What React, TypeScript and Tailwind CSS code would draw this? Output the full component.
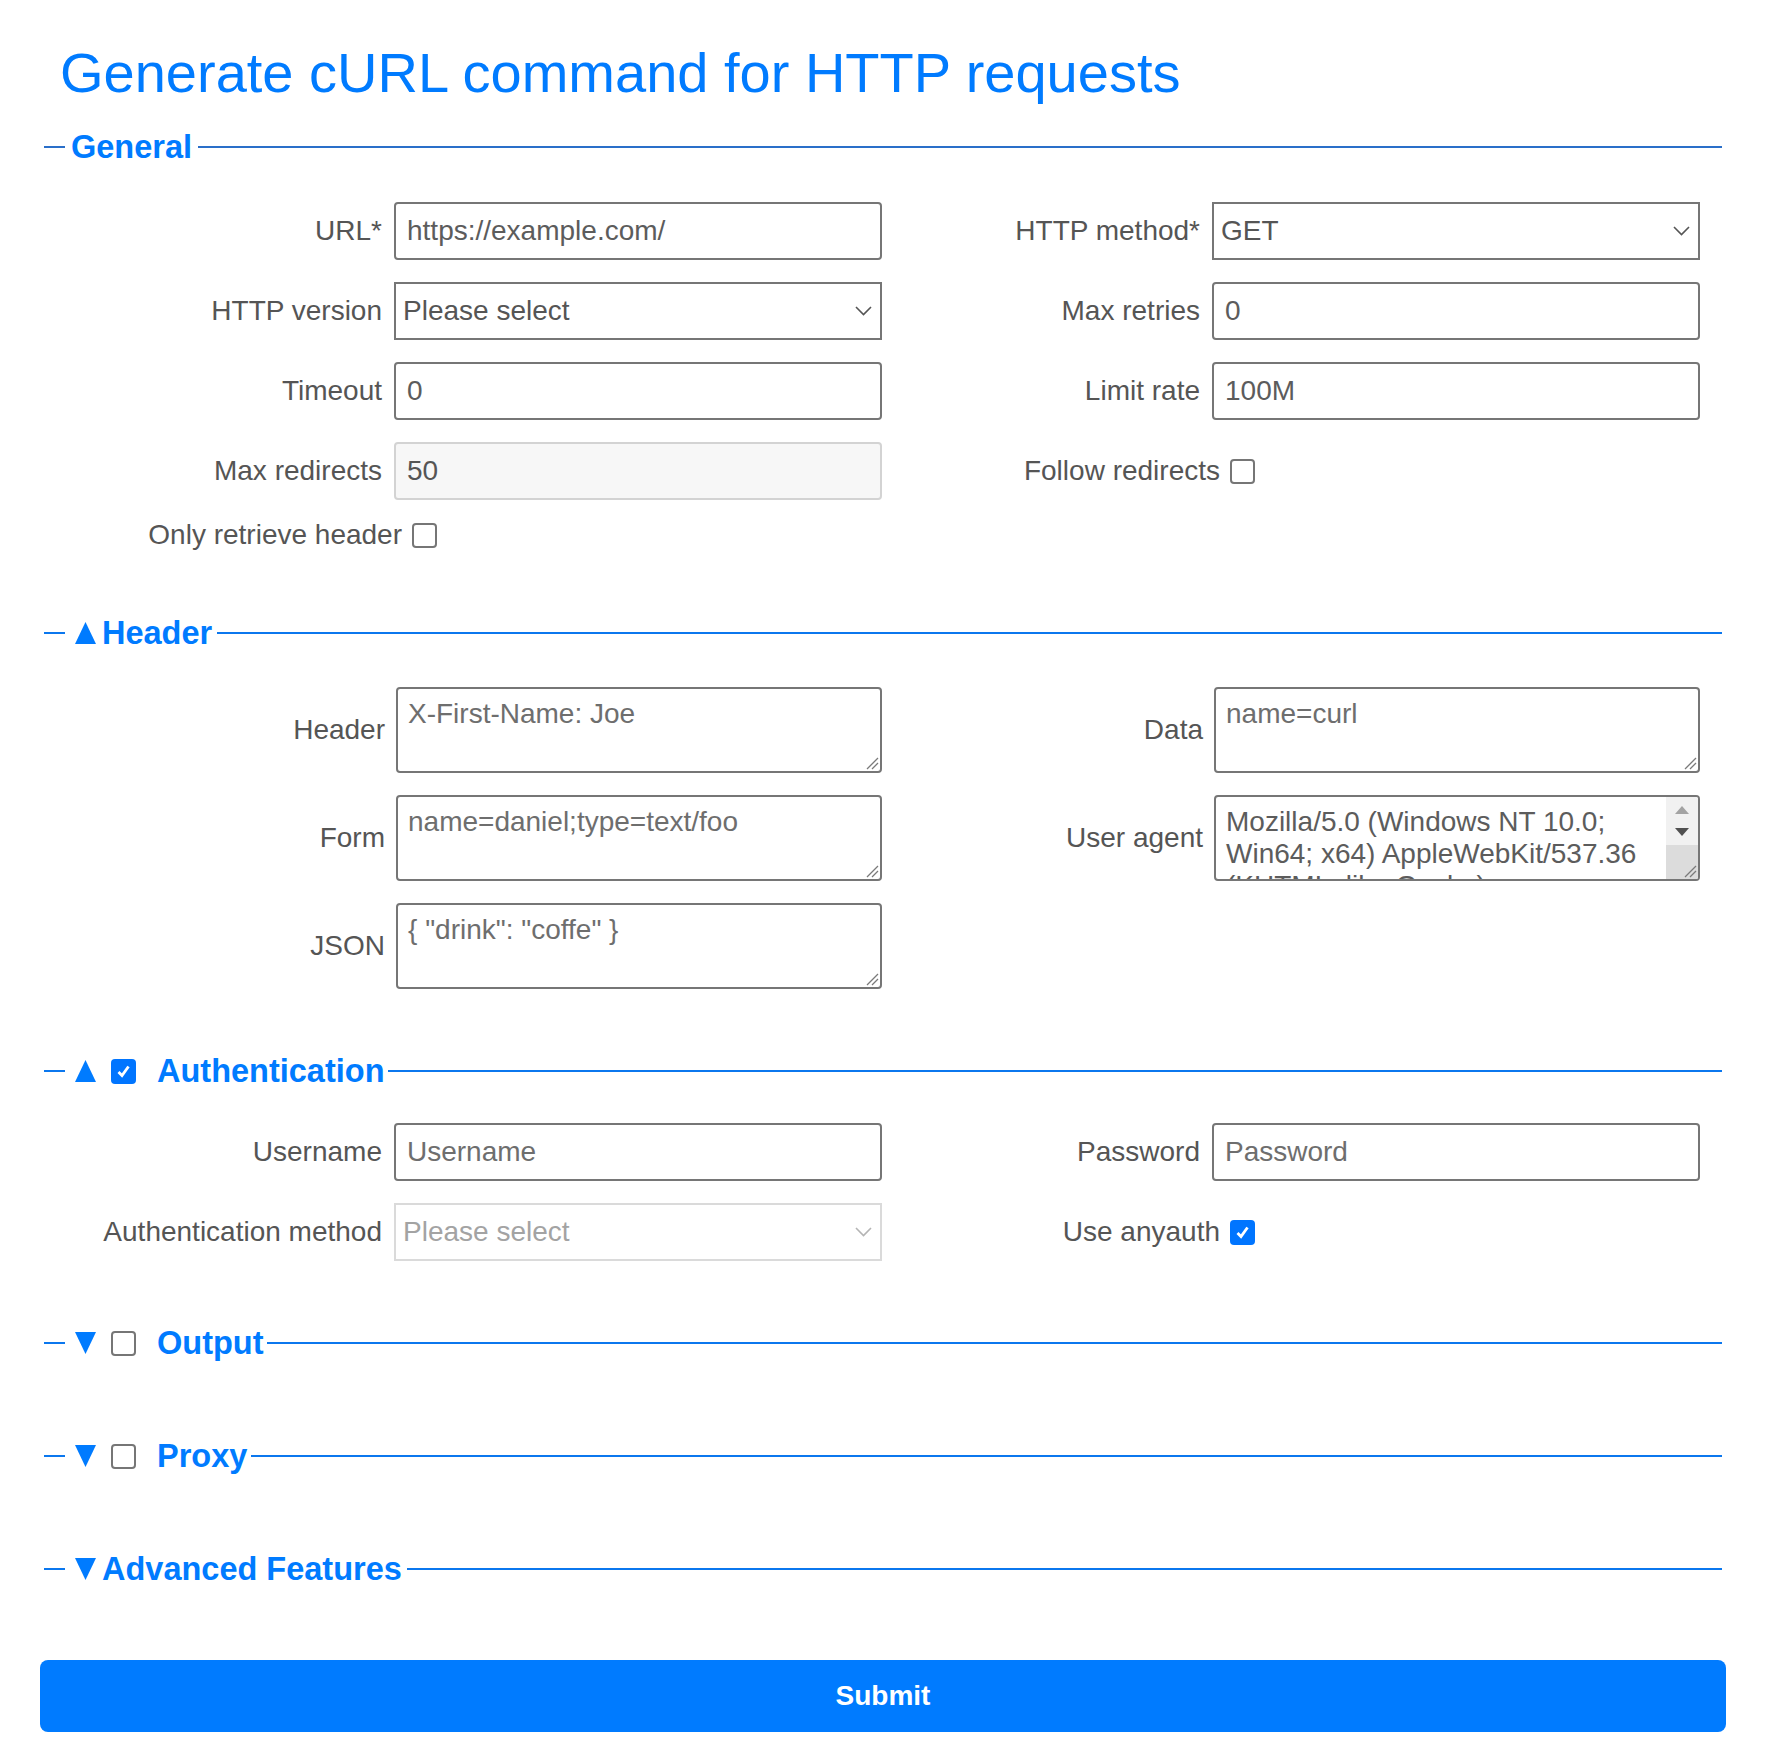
import React from "react";

function Chevron({ disabled }: { disabled?: boolean }) {
  return (
    <svg
      width="17"
      height="10"
      viewBox="0 0 17 10"
      className="pointer-events-none absolute right-[10px] top-1/2 -translate-y-1/2"
    >
      <polyline
        points="1,1 8.5,8.5 16,1"
        fill="none"
        stroke={disabled ? "#b4b4b4" : "#555555"}
        strokeWidth="1.6"
      />
    </svg>
  );
}

function Grip() {
  return (
    <svg
      width="14"
      height="14"
      viewBox="0 0 14 14"
      className="pointer-events-none absolute bottom-[3px] right-[3px]"
    >
      <line x1="13" y1="2" x2="2" y2="13" stroke="#7a7a7a" strokeWidth="1.3" />
      <line x1="13" y1="7" x2="7" y2="13" stroke="#7a7a7a" strokeWidth="1.3" />
    </svg>
  );
}

function Box({ checked }: { checked?: boolean }) {
  if (checked) {
    return (
      <span className="inline-flex h-[25px] w-[25px] shrink-0 items-center justify-center rounded-[4px] bg-[#0075ff]">
        <svg width="17" height="17" viewBox="0 0 17 17">
          <path d="M3.5 9 L7 12.5 L13.5 3.5" fill="none" stroke="#ffffff" strokeWidth="2.8" />
        </svg>
      </span>
    );
  }
  return <span className="inline-block h-[25px] w-[25px] shrink-0 rounded-[4px] border-2 border-[#767676] bg-white" />;
}

function Tri({ down }: { down?: boolean }) {
  return (
    <svg width="21" height="22" viewBox="0 0 21 22" className="shrink-0">
      <polygon points={down ? "0,0 21,0 10.5,22" : "10.5,0 21,22 0,22"} fill="#007bff" />
    </svg>
  );
}

function Field({ label, children }: { label: string; children: React.ReactNode }) {
  return (
    <div className="flex items-center">
      <label className="w-[318px] shrink-0 text-right text-[28px] leading-[32px] text-[#555555]">{label}</label>
      <div className="relative ml-[12px] flex-1">{children}</div>
    </div>
  );
}

function AreaField({ label, children }: { label: string; children: React.ReactNode }) {
  return (
    <div className="flex items-center">
      <label className="w-[321px] shrink-0 text-right text-[28px] leading-[32px] text-[#555555]">{label}</label>
      <div className="relative ml-[11px] flex-1">{children}</div>
    </div>
  );
}

function CheckField({ label, checked }: { label: string; checked?: boolean }) {
  return (
    <div className="flex h-[26px] items-center">
      <label className="w-[338px] shrink-0 text-right text-[28px] leading-[32px] text-[#555555]">{label}</label>
      <div className="ml-[10px] flex items-center">
        <Box checked={checked} />
      </div>
    </div>
  );
}

const inputCls =
  "block h-[58px] w-full rounded-[4px] border-2 border-[#767676] bg-white px-[11px] text-[28px] text-[#5c5c5c] placeholder:text-[#6e6e6e] outline-none";
const selectCls =
  "block h-[58px] w-full appearance-none rounded-none border-2 border-[#767676] bg-white pl-[7px] pr-[40px] text-[28px] text-[#555555] outline-none";
const areaCls =
  "block h-[86px] w-full resize-none overflow-hidden rounded-[4px] border-2 border-[#767676] bg-white px-[10px] pt-[9px] text-[28px] leading-[32px] text-[#5c5c5c] placeholder:text-[#6e6e6e] outline-none";

export default function App() {
  return (
    <div className="w-[1686px] ml-[40px] pt-[39px] font-['Liberation_Sans',Arial,sans-serif]">
      <h1 className="pl-[20px] text-[56px] font-normal leading-[67px] text-[#007bff]">
        Generate cURL command for HTTP requests
      </h1>

      {/* General */}
      <section className="mx-[4px] mt-[23px]">
        <div className="flex h-[36px] items-center">
          <div className="h-[2px] w-[21px] bg-[#2a6fc9]" />
          <span className="px-[6px] text-[32.5px] font-bold leading-[36px] text-[#007bff]">General</span>
          <div className="h-[2px] flex-1 bg-[#2a6fc9]" />
        </div>
        <div className="mt-[37px] grid grid-cols-2 items-center gap-y-[22px] pl-[20px] pr-[22px]">
          <Field label="URL*">
            <input className={inputCls} defaultValue="https://example.com/" />
          </Field>
          <Field label="HTTP method*">
            <select className={selectCls} defaultValue="GET">
              <option>GET</option>
              <option>POST</option>
              <option>PUT</option>
              <option>DELETE</option>
            </select>
            <Chevron />
          </Field>
          <Field label="HTTP version">
            <select className={selectCls} defaultValue="">
              <option value="">Please select</option>
              <option>HTTP/1.0</option>
              <option>HTTP/1.1</option>
              <option>HTTP/2</option>
            </select>
            <Chevron />
          </Field>
          <Field label="Max retries">
            <input className={inputCls} defaultValue="0" />
          </Field>
          <Field label="Timeout">
            <input className={inputCls} defaultValue="0" />
          </Field>
          <Field label="Limit rate">
            <input className={inputCls} defaultValue="100M" />
          </Field>
          <Field label="Max redirects">
            <input
              className="block h-[58px] w-full rounded-[4px] border-2 border-[#d3d3d3] bg-[#f7f7f7] px-[11px] text-[28px] text-[#555555] outline-none"
              defaultValue="50"
              readOnly
            />
          </Field>
          <CheckField label="Follow redirects" />
          <CheckField label="Only retrieve header" />
          <div />
        </div>
      </section>

      {/* Header */}
      <section className="mx-[4px] mt-[67px]">
        <div className="flex h-[36px] items-center">
          <div className="h-[2px] w-[21px] bg-[#0b77ee]" />
          <div className="ml-[10px] flex items-center pr-[5px]">
            <Tri />
            <span className="ml-[6px] text-[32.5px] font-bold leading-[36px] text-[#007bff]">Header</span>
          </div>
          <div className="h-[2px] flex-1 bg-[#0b77ee]" />
        </div>
        <div className="mt-[36px] grid grid-cols-2 items-center gap-y-[22px] pl-[20px] pr-[22px]">
          <AreaField label="Header">
            <textarea className={areaCls} placeholder="X-First-Name: Joe" />
            <Grip />
          </AreaField>
          <AreaField label="Data">
            <textarea className={areaCls} placeholder="name=curl" />
            <Grip />
          </AreaField>
          <AreaField label="Form">
            <textarea className={areaCls} placeholder="name=daniel;type=text/foo" />
            <Grip />
          </AreaField>
          <AreaField label="User agent">
            <textarea
              className="block h-[86px] w-full resize-none overflow-hidden rounded-[4px] border-2 border-[#767676] bg-white pl-[10px] pr-[40px] pt-[9px] text-[28px] leading-[32px] text-[#5c5c5c] outline-none"
              defaultValue="Mozilla/5.0 (Windows NT 10.0; Win64; x64) AppleWebKit/537.36 (KHTML, like Gecko) Chrome/120.0.0.0 Safari/537.36"
            />
            <div className="pointer-events-none absolute bottom-[2px] right-[2px] top-[2px] w-[32px] overflow-hidden rounded-r-[2px] bg-[#f1f1f1]">
              <svg width="14" height="8" viewBox="0 0 14 8" className="absolute left-[9px] top-[9px]">
                <polygon points="7,0 14,8 0,8" fill="#a3a3a3" />
              </svg>
              <svg width="14" height="8" viewBox="0 0 14 8" className="absolute left-[9px] top-[31px]">
                <polygon points="0,0 14,0 7,8" fill="#505050" />
              </svg>
              <div className="absolute bottom-0 left-0 right-0 top-[48px] bg-[#dcdcdc]" />
            </div>
            <Grip />
          </AreaField>
          <AreaField label="JSON">
            <textarea className={areaCls} placeholder='{ "drink": "coffe" }' />
            <Grip />
          </AreaField>
          <div />
        </div>
      </section>

      {/* Authentication */}
      <section className="mx-[4px] mt-[64px]">
        <div className="flex h-[36px] items-center">
          <div className="h-[2px] w-[21px] bg-[#0b77ee]" />
          <div className="ml-[10px] flex items-center pr-[4px]">
            <Tri />
            <span className="ml-[15px] flex items-center">
              <Box checked />
            </span>
            <span className="ml-[21px] text-[32.5px] font-bold leading-[36px] text-[#007bff]">Authentication</span>
          </div>
          <div className="h-[2px] flex-1 bg-[#0b77ee]" />
        </div>
        <div className="mt-[34px] grid grid-cols-2 items-center gap-y-[22px] pl-[20px] pr-[22px]">
          <Field label="Username">
            <input className={inputCls} placeholder="Username" />
          </Field>
          <Field label="Password">
            <input className={inputCls} type="password" placeholder="Password" />
          </Field>
          <Field label="Authentication method">
            <select
              className="block h-[58px] w-full appearance-none rounded-none border-2 border-[#dadada] bg-white pl-[7px] pr-[40px] text-[28px] text-[#a3a3a3] opacity-100 outline-none"
              defaultValue=""
              disabled
            >
              <option value="">Please select</option>
              <option>Basic</option>
              <option>Digest</option>
            </select>
            <Chevron disabled />
          </Field>
          <CheckField label="Use anyauth" checked />
        </div>
      </section>

      {/* Output */}
      <section className="mx-[4px] mt-[64px]">
        <div className="flex h-[36px] items-center">
          <div className="h-[2px] w-[21px] bg-[#0b77ee]" />
          <div className="ml-[10px] flex items-center pr-[4px]">
            <Tri down />
            <span className="ml-[15px] flex items-center">
              <Box />
            </span>
            <span className="ml-[21px] text-[32.5px] font-bold leading-[36px] text-[#007bff]">Output</span>
          </div>
          <div className="h-[2px] flex-1 bg-[#0b77ee]" />
        </div>
      </section>

      {/* Proxy */}
      <section className="mx-[4px] mt-[77px]">
        <div className="flex h-[36px] items-center">
          <div className="h-[2px] w-[21px] bg-[#0b77ee]" />
          <div className="ml-[10px] flex items-center pr-[4px]">
            <Tri down />
            <span className="ml-[15px] flex items-center">
              <Box />
            </span>
            <span className="ml-[21px] text-[32.5px] font-bold leading-[36px] text-[#007bff]">Proxy</span>
          </div>
          <div className="h-[2px] flex-1 bg-[#0b77ee]" />
        </div>
      </section>

      {/* Advanced */}
      <section className="mx-[4px] mt-[77px]">
        <div className="flex h-[36px] items-center">
          <div className="h-[2px] w-[21px] bg-[#0b77ee]" />
          <div className="ml-[10px] flex items-center pr-[5px]">
            <Tri down />
            <span className="ml-[6px] text-[32.5px] font-bold leading-[36px] text-[#007bff]">Advanced Features</span>
          </div>
          <div className="h-[2px] flex-1 bg-[#0b77ee]" />
        </div>
      </section>

      <button
        type="button"
        className="mt-[73px] block h-[72px] w-full rounded-[8px] bg-[#007bff] text-[28px] font-bold text-white"
      >
        Submit
      </button>
    </div>
  );
}
